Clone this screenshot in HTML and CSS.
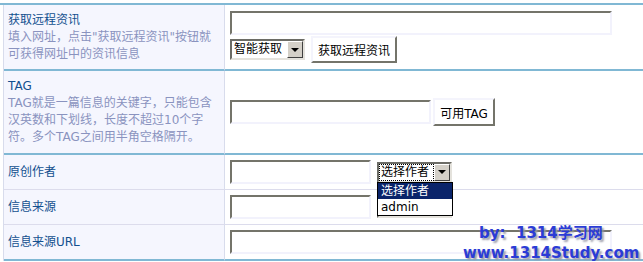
FILE: index.html
```html
<!DOCTYPE html>
<html lang="zh-CN">
<head>
  <meta charset="UTF-8" />
  <title>发布资讯</title>
  <link rel="stylesheet" href="styles.css">
</head>
<body>
  <div class="panel">
    <table class="form">
      <tr class="row-remote">
        <td class="name">
          <div class="label">获取远程资讯</div>
          <div class="tip">填入网址，点击"获取远程资讯"按钮就可获得网址中的资讯信息</div>
        </td>
        <td class="field">
          <input type="text" class="text w-long">
          <div class="line">
            <div class="combo"><span class="value">智能获取</span><span class="drop"></span></div>
            <button class="btn btn-remote">获取远程资讯</button>
          </div>
        </td>
      </tr>
      <tr class="row-tag">
        <td class="name">
          <div class="label">TAG</div>
          <div class="tip">TAG就是一篇信息的关键字，只能包含汉英数和下划线，长度不超过10个字符。多个TAG之间用半角空格隔开。</div>
        </td>
        <td class="field">
          <div class="line tight">
            <input type="text" class="text w-mid">
            <button class="btn btn-tag">可用TAG</button>
          </div>
        </td>
      </tr>
      <tr class="row-small sep">
        <td class="name"><div class="label">原创作者</div></td>
        <td class="field">
          <div class="line">
            <input type="text" class="text w-short">
            <div class="combo open">
              <span class="value focus">选择作者</span><span class="drop"></span>
              <!-- opened list -->
              <ul class="list">
                <li class="on">选择作者</li>
                <li>admin</li>
              </ul>
            </div>
          </div>
        </td>
      </tr>
      <tr class="row-small sep">
        <td class="name"><div class="label">信息来源</div></td>
        <td class="field">
          <div class="line">
            <input type="text" class="text w-short">
            <!-- covered by the open author list -->
            <div class="combo"><span class="value"></span><span class="drop"></span></div>
          </div>
        </td>
      </tr>
      <tr class="row-small last">
        <td class="name"><div class="label">信息来源URL</div></td>
        <td class="field">
          <input type="text" class="text w-long">
        </td>
      </tr>
    </table>

    <!-- site watermark -->
    <div class="mark">
      <div class="mark-by">by:&nbsp; 1314学习网</div>
      <div class="mark-url">www.1314Study.com</div>
    </div>
  </div>
</body>
</html>
```

FILE: styles.css
```css
body {
  margin: 0;
  background: #fff;
  font-family: "DejaVu Sans", "Noto Sans CJK SC", sans-serif;
  font-size: 12px;
  color: #000;
}
.panel {
  position: relative;
  margin-top: 3px;
  border-top: 2px solid #80b8d4;
}
.form {
  margin-left: 3px;
  width: calc(100% - 3px);
  border-collapse: separate;
  border-spacing: 0;
  border-left: 1px solid #d8dcec;
}
.form td {
  vertical-align: middle;
  padding: 0;
}
.name {
  width: 206px;
  padding: 0 10px 0 4px !important;
  background: #f5f6fe;
  border-right: 1px solid #d8dcec;
  line-height: 17px;
}
.label {
  color: #13508f;
}
.tip {
  color: #8a93bf;
}
.field {
  padding-left: 5px !important;
}

/* rows */
.row-remote { height: 66px; }
.row-tag { height: 84px; }
.row-small { height: 35px; }
.row-small.last { height: 36px; }
.row-remote td, .row-tag td, .last td {
  border-bottom: 2px solid #80b8d4;
}
.sep td {
  border-bottom: 1px solid #dcdcec;
}

/* controls */
.text {
  display: block;
  box-sizing: border-box;
  height: 24px;
  margin: 0;
  padding: 0 3px;
  border: 2px solid;
  border-color: #74746a #f2f2fc #f2f2fc #74746a;
  background: #fff;
  font: inherit;
}
.w-long { width: 382px; }
.w-mid { width: 201px; }
.w-short { width: 141px; }

.line {
  display: flex;
  align-items: center;
  gap: 6px;
}
.row-remote .line {
  margin-top: 1px;
}
.line.tight {
  gap: 2px;
}

.btn {
  box-sizing: border-box;
  margin: 0;
  padding: 0;
  border: 2px solid;
  border-color: #f4f4fc #74746a #74746a #f4f4fc;
  background: #fff;
  color: #000;
  font: inherit;
}
.btn-remote { width: 86px; height: 27px; }
.btn-tag { width: 62px; height: 28px; }

.combo {
  position: relative;
  display: flex;
  box-sizing: border-box;
  width: 75px;
  height: 21px;
  border: 2px solid;
  border-color: #6c6c66 #e4e2dc #e4e2dc #6c6c66;
  background: #fff;
}
.value {
  flex: 1;
  padding-left: 2px;
  line-height: 17px;
  white-space: nowrap;
}
.value.focus {
  outline: 1px dotted #000;
  outline-offset: -1px;
}
.drop {
  box-sizing: border-box;
  width: 16px;
  height: 17px;
  background: #d4d0c8;
  border: 1px solid;
  border-color: #fff #404040 #404040 #fff;
  display: flex;
  align-items: center;
  justify-content: center;
}
.drop::after {
  content: "";
  border-left: 4px solid transparent;
  border-right: 4px solid transparent;
  border-top: 4px solid #000;
}
.list {
  position: absolute;
  top: 18px;
  left: -2px;
  z-index: 2;
  width: 76px;
  box-sizing: border-box;
  margin: 0;
  padding: 0;
  list-style: none;
  border: 1px solid #000;
  background: #fff;
}
.list li {
  height: 16px;
  line-height: 16px;
  padding-left: 3px;
}
.list li.on {
  background: #0a246a;
  color: #fff;
}

/* watermark */
.mark {
  position: absolute;
  left: 463px;
  top: 218px;
  font-size: 15px;
  font-weight: bold;
  line-height: 20px;
  color: #2b3cd6;
  text-shadow: 2px 2px 2px #9a9aa8;
  white-space: nowrap;
}
.mark-by {
  padding-left: 16px;
}
```
